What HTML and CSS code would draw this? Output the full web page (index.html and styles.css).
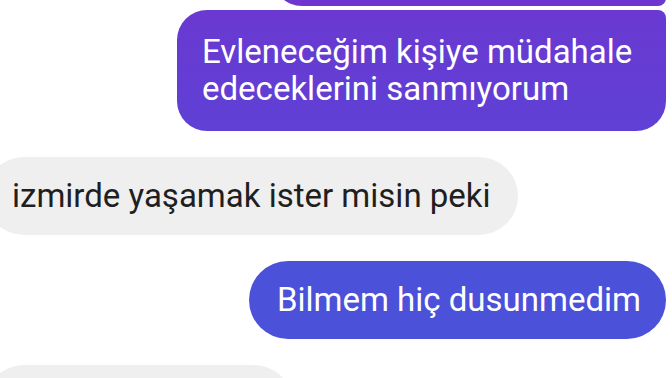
FILE: index.html
```html
<!DOCTYPE html>
<html lang="tr">

<head>
    <meta charset="UTF-8">
    <meta name="viewport" content="width=device-width, initial-scale=1.0">
    <title>Sohbet</title>
    <link rel="stylesheet" href="styles.css">
</head>

<body>
    <div id="chat">
        <div id="messages">
            <div class="group sent">
                <div class="bubble out first">Peki ailen ne der</div>
                <div class="bubble out last">Evleneceğim kişiye müdahale edeceklerini sanmıyorum</div>
            </div>
            <div class="group received">
                <div class="bubble in">izmirde yaşamak ister misin peki</div>
            </div>
            <div class="group sent">
                <div class="bubble out single blue">Bilmem hiç dusunmedim</div>
            </div>
            <div class="group received">
                <div class="bubble in">Neden olmasın ki</div>
            </div>
        </div>
    </div>
</body>

</html>
```

FILE: styles.css
```css
body {
    font-family: Roboto, "Noto Sans", sans-serif;
    background-color: #fff;
    margin: 0;
    padding: 0;
}

#chat {
    height: 378px;
    overflow: hidden;
}

#messages {
    display: flex;
    flex-direction: column;
    gap: 26px;
    margin-top: -72px;
}

.group {
    display: flex;
    flex-direction: column;
    gap: 4px;
}

.sent {
    align-items: flex-end;
    padding-right: 6px;
}

.received {
    align-items: flex-start;
    margin-left: -15px;
}

.bubble {
    font-size: 33px;
    line-height: 36px;
    padding: 21px 27px;
    border-radius: 39px;
    max-width: 490px;
}

.in {
    background-color: #efefef;
    color: #1f1f1f;
}

.out {
    color: #fff;
}

.first {
    background-color: #6d36cf;
    border-radius: 30px 30px 8px 30px;
    width: 340px;
}

.last {
    background: linear-gradient(#6a39d1, #5f40d5);
    border-radius: 30px 8px 30px 30px;
    padding: 23px 27px 24px 25px;
    line-height: 37px;
    max-width: 437px;
}

.blue {
    background-color: #4b51d8;
    padding-left: 28px;
    padding-right: 25px;
}
```
